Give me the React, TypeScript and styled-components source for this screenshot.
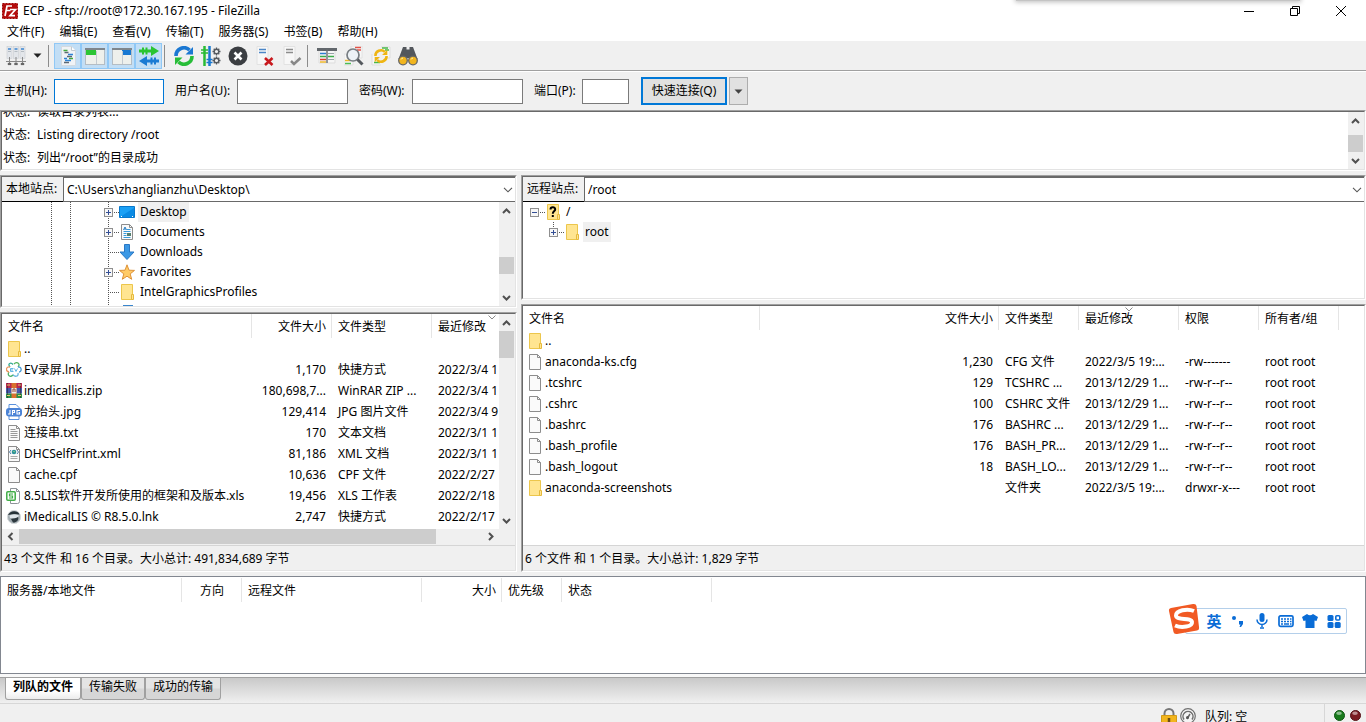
import React from "react";
import styled, { createGlobalStyle, css } from "styled-components";

const Global = createGlobalStyle`
  *, *::before, *::after { box-sizing: border-box; }
  html, body { margin: 0; background: #f0f0f0; }
  body, button, input, select, table {
    font-family: "Noto Sans", "Noto Sans CJK SC", sans-serif;
    font-size: 12px;
    line-height: 20px;
    color: #000;
  }
  button { margin: 0; padding: 0; border: 0; background: none; }
  svg { display: block; flex: none; }
`;

const Window = styled.div`
  position: relative;
  display: flex;
  flex-direction: column;
  height: 100vh;
  overflow: hidden;
  background: #f0f0f0;
`;

const FloatingEdge = styled.div`
  position: absolute;
  top: -8px;
  right: 66px;
  width: 284px;
  height: 9px;
  background: #c4c4c4;
  box-shadow: 0 0 5px 1px #bbb;
`;

const TitleBar = styled.header`
  display: flex;
  align-items: center;
  flex: none;
  height: 22px;
  padding: 0 2px 0 2px;
  gap: 5px;
  background: #fff;
`;

const Title = styled.h1`
  flex: 1;
  margin: 0;
  font-size: 12px;
  line-height: 22px;
  font-weight: 400;
`;

const WindowButton = styled.button`
  display: flex;
  align-items: center;
  justify-content: center;
  width: 46px;
  height: 20px;
  margin-left: -5px;
`;

const MenuBar = styled.nav`
  display: flex;
  flex: none;
  gap: 1px;
  height: 19px;
  background: #fff;
`;

const MenuItem = styled.button`
  height: 19px;
  padding: 0 7px;
  line-height: 20px;
  white-space: nowrap;
`;

const Toolbar = styled.div`
  display: flex;
  align-items: center;
  flex: none;
  height: 30px;
  padding: 0 0 0 2px;
  border-bottom: 1px solid #a0a0a0;
  box-shadow: 0 1px 0 #fff;
`;

const ToolButton = styled.button<{ $on?: boolean; $wide?: boolean }>`
  display: flex;
  align-items: center;
  justify-content: center;
  gap: 7px;
  width: ${(p) => (p.$wide ? 44 : 27)}px;
  height: 26px;
  border: 1px solid transparent;
  ${(p) =>
    p.$on &&
    css`
      background: #c2def5;
      border-color: #90c8f6;
    `}
`;

const ToolSeparator = styled.div`
  width: 1px;
  height: 22px;
  margin: 0 5px 0 2px;
  background: #8c8c8c;
`;

const QuickConnect = styled.form`
  display: flex;
  align-items: center;
  flex: none;
  height: 39px;
  padding: 1px 0 0 4px;
`;

const FieldLabel = styled.label<{ $w: number }>`
  width: ${(p) => p.$w}px;
  white-space: nowrap;
`;

const Field = styled.input<{ $w: number; $focused?: boolean }>`
  width: ${(p) => p.$w}px;
  height: 25px;
  margin: 0 11px 0 0;
  padding: 0 4px;
  border: 1px solid ${(p) => (p.$focused ? "#0078d7" : "#7a7a7a")};
  border-radius: 0;
  background: #fff;
  outline: none;
`;

const ConnectButton = styled.button`
  width: 86px;
  height: 28px;
  margin: 0 2px 0 1px;
  border: 2px solid #0078d7;
  background: #e1e1e1;
`;

const HistoryButton = styled.button`
  display: flex;
  align-items: center;
  justify-content: center;
  width: 19px;
  height: 28px;
  border: 1px solid #adadad;
  background: #e1e1e1;
`;

const Frame = styled.section<{ $h?: number; $grow?: boolean }>`
  display: flex;
  min-height: 0;
  flex: ${(p) => (p.$grow ? "1 1 0" : "none")};
  ${(p) => p.$h && css`height: ${p.$h}px;`}
  border: 1px solid;
  border-color: #a0a0a0 #fff #fff #a0a0a0;
`;

const Sunken = styled.div`
  display: flex;
  flex-direction: column;
  flex: 1;
  min-width: 0;
  min-height: 0;
  border: 1px solid;
  border-color: #696969 #e3e3e3 #e3e3e3 #696969;
  background: #fff;
`;

const Split = styled.div`
  display: flex;
  flex: 1;
  min-height: 0;
  overflow: hidden;
`;

const LogLines = styled.dl`
  display: flex;
  flex: 1;
  flex-direction: column;
  justify-content: flex-end;
  margin: 0;
  overflow: hidden;
`;

const LogLine = styled.div`
  display: flex;
  flex: none;
  height: 23px;
  padding-left: 1px;
  line-height: 23px;
  dt { width: 34px; }
  dd { margin: 0; }
`;

const Track = styled.div<{ $across?: boolean }>`
  display: flex;
  flex: none;
  flex-direction: ${(p) => (p.$across ? "row" : "column")};
  ${(p) => (p.$across ? "height: 15px;" : "width: 16px; padding-right: 1px;")}
  background: #f0f0f0;
`;

const TrackButton = styled.button<{ $across?: boolean }>`
  display: flex;
  flex: none;
  align-items: center;
  justify-content: center;
  width: ${(p) => (p.$across ? 17 : 15)}px;
  height: ${(p) => (p.$across ? 15 : 17)}px;
`;

const Space = styled.div<{ $grow: number }>`
  flex: ${(p) => p.$grow} 1 0;
`;

const Thumb = styled.div<{ $size: number; $across?: boolean }>`
  flex: none;
  ${(p) => (p.$across ? `width: ${p.$size}%;` : `height: ${p.$size}px;`)}
  background: #cdcdcd;
`;

const Panes = styled.main`
  display: grid;
  grid-template-columns: minmax(0, 517fr) minmax(0, 845fr);
  gap: 4px;
  flex: 1;
  min-height: 0;
  padding-top: 4px;
`;

const Pane = styled.div`
  display: flex;
  flex-direction: column;
  gap: 4px;
  min-height: 0;
`;

const PathRow = styled.div`
  display: flex;
  flex: none;
  height: 25px;
`;

const PathLabel = styled.label`
  width: 61px;
  padding-left: 4px;
  border-bottom: 1px solid #000;
  background: #f0f0f0;
  line-height: 23px;
  white-space: nowrap;
`;

const Combo = styled.div`
  position: relative;
  flex: 1;
  min-width: 0;
  border: 1px solid #696969;
  border-right: 0;
  select {
    width: 100%;
    height: 23px;
    padding: 0 20px 0 3px;
    border: 0;
    border-radius: 0;
    background: #fff;
    appearance: none;
    outline: none;
    line-height: 22px;
  }
  svg { position: absolute; top: 9px; right: 2px; pointer-events: none; }
`;

const TreeList = styled.ul`
  flex: 1;
  margin: 0;
  padding: 0;
  overflow: hidden;
  list-style: none;
`;

const TreeRow = styled.li`
  display: flex;
  align-items: center;
  height: 20px;
`;

const TreeLabel = styled.span<{ $selected?: boolean }>`
  height: 20px;
  margin-left: 3px;
  padding: 0 2px;
  line-height: 20px;
  background: ${(p) => (p.$selected ? "#f0f0f0" : "transparent")};
`;

const TableClip = styled.div`
  flex: 1;
  min-width: 0;
  overflow: hidden;
`;

const Table = styled.table<{ $w: number }>`
  width: ${(p) => p.$w}px;
  table-layout: fixed;
  border-collapse: separate;
  border-spacing: 0;
`;

const Th = styled.th<{ $align?: string }>`
  position: relative;
  height: 24px;
  padding: 0 5px 0 6px;
  border-right: 1px solid #e5e5e5;
  font-weight: 400;
  line-height: 23px;
  text-align: ${(p) => p.$align || "left"};
  white-space: nowrap;
  svg { position: absolute; top: 1px; left: calc(50% - 4px); }
`;

const Td = styled.td<{ $align?: string }>`
  height: 21px;
  padding: 0 6px;
  overflow: hidden;
  line-height: 21px;
  text-align: ${(p) => p.$align || "left"};
  text-overflow: ellipsis;
  white-space: nowrap;
`;

const NameCell = styled.span`
  display: flex;
  align-items: center;
  gap: 2px;
  height: 21px;
  margin-left: -2px;
`;

const Summary = styled.p`
  flex: none;
  height: 25px;
  margin: 0;
  padding-left: 2px;
  border-top: 1px solid #d5d5d5;
  background: #f0f0f0;
  line-height: 26px;
`;

const HScrollRow = styled.div`
  display: flex;
  flex: none;
  height: 16px;
  padding: 0 16px 1px 0;
  background: #f0f0f0;
  > div { flex: 1; }
`;

const Queue = styled.section`
  flex: none;
  height: 98px;
  margin-top: 4px;
  padding-top: 1px;
  border: 1px solid #828790;
  background: #fff;
`;

const TabStrip = styled.div`
  display: flex;
  align-items: flex-start;
  flex: none;
  height: 27px;
  margin-top: 3px;
  padding-left: 5px;
  border-top: 1px solid #a0a0a0;
  border-bottom: 1px solid #d7d7d7;
  background: linear-gradient(#c9c9c9, #f0f0f0);
  box-shadow: 0 -3px 0 #f8f8f8;
`;

const Tab = styled.button<{ $active?: boolean }>`
  height: 22px;
  padding: 0 7px 3px;
  border: 1px solid #a0a0a0;
  border-top: 0;
  border-radius: 0 0 3px 3px;
  line-height: 18px;
  font-weight: ${(p) => (p.$active ? 700 : 400)};
  white-space: nowrap;
  background: ${(p) =>
    p.$active ? "linear-gradient(#fff, #fff 60%, #ececec)" : "linear-gradient(#e4e4e4 45%, #d6d6d6 55%)"};
`;

const StatusBar = styled.footer`
  display: flex;
  flex: none;
  justify-content: flex-end;
  height: 18px;
  padding-right: 5px;
  overflow: hidden;
`;

const StatusText = styled.span`
  width: 119px;
  margin-left: 9px;
  line-height: 26px;
`;

const StatusIcons = styled.span`
  display: flex;
  gap: 3px;
  padding-top: 4px;
`;

const Lights = styled.span`
  display: flex;
  gap: 5px;
  padding: 6px 0 0 9px;
  border-left: 1px solid #d7d7d7;
`;

const InputMethod = styled.aside`
  position: absolute;
  right: 19px;
  bottom: 88px;
  display: flex;
  align-items: center;
  width: 162px;
  height: 26px;
  padding-left: 16px;
  border: 1px solid #b4cfea;
  border-radius: 2px;
  background: #fff;
`;

const ImeLogo = styled.span`
  position: absolute;
  left: -18px;
  bottom: -2px;
`;

const ImeButton = styled.button`
  display: flex;
  align-items: center;
  justify-content: center;
  width: 24px;
  height: 24px;
  color: #0a6cd6;
  font-size: 15px;
  font-weight: 700;
`;

/* ---------- icons ---------- */

const Svg = ({ w, h, children }: { w: number; h: number; children: React.ReactNode }) => (
  <svg width={w} height={h} viewBox={`0 0 ${w} ${h}`} fill="none" aria-hidden="true">
    {children}
  </svg>
);

const chevrons = {
  up: "M1 7 L4.5 3.5 L8 7",
  down: "M1 3 L4.5 6.5 L8 3",
  left: "M6.5 1 L3 4.5 L6.5 8",
  right: "M3 1 L6.5 4.5 L3 8",
};
const Chevron = ({ dir }: { dir: keyof typeof chevrons }) => (
  <Svg w={9} h={9}>
    <path d={chevrons[dir]} stroke="#505050" strokeWidth="2" />
  </Svg>
);
const ComboArrow = () => (
  <Svg w={10} h={6}>
    <path d="M1 .8 L5 4.8 L9 .8" stroke="#555" strokeWidth="1.1" />
  </Svg>
);
const SortMark = () => (
  <Svg w={8} h={5}>
    <path d="M.5 .5 L4 4 L7.5 .5" stroke="#8a8a8a" strokeWidth="1" />
  </Svg>
);
const Triangle = ({ color = "#222" }: { color?: string }) => (
  <Svg w={9} h={5}>
    <path d="M.5 .5H8.5L4.5 4.8Z" fill={color} />
  </Svg>
);

const AppLogo = () => (
  <Svg w={16} h={16}>
    <rect x=".5" y=".5" width="15" height="15" fill="#b30c0c" stroke="#9c0707" strokeDasharray="2 1" />
    <path d="M3 13 5 3h5M4 7.5h4.5M8 6.5h5.5L8 12.7h5" stroke="#fff" strokeWidth="1.7" />
  </Svg>
);

const SiteManagerIcon = () => (
  <Svg w={20} h={20}>
    {[1, 7.5, 14].map((x) => (
      <g key={x}>
        <rect x={x} y=".5" width="5" height="12" fill="#e3e6ea" stroke="#c9cdd2" strokeWidth=".6" />
        <path d={`M${x + 1} 3h3`} stroke="#2f7fd0" strokeWidth="1.4" />
        <path d={`M${x + 1} 5.500h3`} stroke="#b5bcc2" />
        <path d={`M${x + 2.5} 11v7`} stroke="#888" />
        <path d={`M${x + 0.8} 18h3.400`} stroke="#666" strokeWidth="2.200" />
      </g>
    ))}
    <path d="M0 15.500h20" stroke="#888" strokeWidth="1" />
  </Svg>
);
const LogIcon = () => (
  <Svg w={20} h={20}>
    <path d="M3.500 .500h10l4 4v15h-14z" fill="#f0f3f6" stroke="#d3dae0" />
    <path d="M13.500 .500v4h4" fill="#fff" stroke="#c2cad1" />
    <path d="M5.500 4.500h4M11 12.500h4" stroke="#41a83e" strokeWidth="1.500" />
    <path d="M6.500 6.500h4M9 10.500h5M6 16.500h5" stroke="#5d6873" strokeWidth="1.500" />
    <path d="M10 8.500h5M6 12.500h3M7 14.500h6" stroke="#2d83d6" strokeWidth="1.500" />
  </Svg>
);
const PaneIcon = ({ remote }: { remote?: boolean }) => (
  <Svg w={20} h={20}>
    <rect x=".5" y="2.500" width="19" height="16" fill="#eef0ec" stroke="#b4bdc4" />
    <rect x="0" y="2" width="20" height="2" fill="#7f868c" />
    <rect x={remote ? 10 : 1} y="4" width={remote ? 9 : 10} height="5" fill={remote ? "#1979d2" : "#2cc534"} />
    <path d={remote ? "M10.500 5v13" : "M11.500 5v13"} stroke="#c3cad0" />
  </Svg>
);
const QueueIcon = () => (
  <Svg w={20} h={20}>
    <path d="M0 3.500h12V0l8 5-8 5V6.500H0z" fill="#2bc531" />
    <path d="M4 1.500v7M7.500 1.500v7" stroke="#2bc531" strokeWidth="2" />
    <path d="M20 13.500H8V10L0 15l8 5v-3.500h12z" fill="#1b7bd3" />
    <path d="M12.500 11.500v7M16 11.500v7" stroke="#1b7bd3" strokeWidth="2" />
  </Svg>
);
const RefreshIcon = ({ small }: { small?: boolean }) => (
  <svg width={20} height={20} viewBox="0 0 20 20" fill="none" aria-hidden="true">
    {small && <path d="M10 1h9v11h-4M1 8v11h9" fill="#f7f7f7" stroke="#ddd" />}
    {small && <path d="M11 2h6M14 4h4M3 16.500h6" stroke="#48b848" strokeWidth="1.400" />}
    <g transform={small ? "translate(3 3) scale(.7)" : undefined} strokeWidth="3.600">
      <path d="M2 10A8 8 0 0 1 15.500 4" stroke={small ? "#efb512" : "#1b78d2"} />
      <path d="M11.500 8.500H19V1z" fill={small ? "#efb512" : "#1b78d2"} />
      <path d="M18 10A8 8 0 0 1 4.500 16" stroke={small ? "#efb512" : "#27bd38"} />
      <path d="M8.500 11.500H1V19z" fill={small ? "#efb512" : "#27bd38"} />
    </g>
  </svg>
);
const gearTeeth = "M0-4V4M-4 0H4M-2.800-2.800 2.800 2.800M-2.800 2.800 2.800-2.800";
const Gear = ({ x, y }: { x: number; y: number }) => (
  <g transform={`translate(${x} ${y})`}>
    <path d={gearTeeth} stroke="#555a60" strokeWidth="1.300" />
    <circle r="2.300" fill="#f0f0f0" stroke="#555a60" strokeWidth="1.400" />
  </g>
);
const ProcessIcon = () => (
  <Svg w={20} h={20}>
    <path d="M3.500 0v20" stroke="#2abb35" strokeWidth="2.500" />
    <path d="M0 4h7M0 7h7" stroke="#2abb35" strokeWidth="1.600" />
    <path d="M8.500 0v20" stroke="#1978d0" strokeWidth="2.500" />
    <path d="M5.500 13.500h6M5.500 16.500h6" stroke="#1978d0" strokeWidth="1.400" />
    <Gear x={15.5} y={5.5} />
    <Gear x={15.5} y={14.5} />
  </Svg>
);
const CancelIcon = () => (
  <Svg w={20} h={20}>
    <circle cx="10" cy="10" r="9.500" fill="#3b3e42" />
    <path d="m6.500 6.500 7 7m0-7-7 7" stroke="#fff" strokeWidth="2.600" />
  </Svg>
);
const ServerIcon = ({ ok }: { ok?: boolean }) => (
  <Svg w={20} h={20}>
    <path d="M2 .500h11v18H2z" fill="#f7f7f7" stroke="#e2e2e2" />
    <path d="M4 3.500h7M4 6.500h7" stroke={ok ? "#8c8c8c" : "#4b86c7"} strokeWidth="1.500" />
    {ok ? (
      <path d="m9 15 3 3 6.500-6" stroke="#888" strokeWidth="2.500" />
    ) : (
      <path d="m10 12 7.500 7m0-7-7.500 7" stroke="#c8181d" strokeWidth="2.600" />
    )}
  </Svg>
);
const FilterIcon = () => (
  <Svg w={20} h={20}>
    <path d="M2 4h16v13H2z" fill="#f6f6f6" stroke="#ddd" />
    <path d="M0 3.500h20" stroke="#62676c" strokeWidth="3" />
    <path d="M10 3v14" stroke="#686d72" strokeWidth="1.400" />
    <path d="M3 7.500h6" stroke="#2d7fd0" strokeWidth="1.500" />
    <path d="M3 10.500h6M11 10.500h6" stroke="#3cae4a" strokeWidth="1.500" />
    <path d="M3 13.500h6" stroke="#db3b31" strokeWidth="1.500" />
    <path d="M11 7.500h6M11 13.500h6" stroke="#9aa2a9" strokeWidth="1.200" />
    <path d="M3 16h6" stroke="#efb61d" strokeWidth="1.400" />
  </Svg>
);
const CompareIcon = () => (
  <Svg w={20} h={20}>
    <path d="M7 0h11v12H7zM0 8h9v11H0z" fill="#f7f7f7" stroke="#ddd" strokeWidth=".8" />
    <path d="M11 1.500h6M13 4h4" stroke="#e25349" strokeWidth="1.500" />
    <path d="M1 14.500h5" stroke="#eeb529" strokeWidth="1.500" />
    <path d="M1 17.500h6" stroke="#4ebb55" strokeWidth="1.500" />
    <circle cx="9" cy="9" r="6" fill="#edf2f6" stroke="#777d82" strokeWidth="1.700" />
    <path d="m13.500 13.500 5 5" stroke="#55595e" strokeWidth="3" />
  </Svg>
);
const BinocularsIcon = () => (
  <Svg w={20} h={20}>
    <path d="M5 1h3.500v2.500h3V1H15l4.500 12-5 3-3.500-4H9l-3.500 4-5-3z" fill="#53575c" />
    <circle cx="5" cy="14.500" r="4.300" fill="#f1b51e" stroke="#666" strokeWidth="1.300" />
    <circle cx="15" cy="14.500" r="4.300" fill="#f1b51e" stroke="#666" strokeWidth="1.300" />
    <path d="M3 13.500a2.500 2.500 0 0 1 2-1.500M13 13.500a2.500 2.500 0 0 1 2-1.500" stroke="#fff0b8" />
  </Svg>
);

const Folder = ({ unknown }: { unknown?: boolean }) => (
  <Svg w={16} h={16}>
    <path d="M2.500.500h11v15h-11z" fill="#ffe591" stroke="#ecc64c" />
    <path d="M12.500 10.500h2v5h-2z" fill="#ffe591" stroke="#e6ba3c" />
    {unknown && (
      <>
        <path d="M5.500 5.500C5.500 2.500 10.200 2.500 10.200 5.300 10.200 7.300 7.800 7.300 7.800 9.700" stroke="#000" strokeWidth="2" />
        <path d="M6.800 11h2v2h-2z" fill="#000" />
      </>
    )}
  </Svg>
);
const Page = ({ children }: { children?: React.ReactNode }) => (
  <Svg w={16} h={16}>
    <g transform="translate(1 0)">
      <path d="M1.500.500h8l3 3v12h-11z" fill="#fafafa" stroke="#8d8d8d" />
      <path d="M9.500.500v3h3" stroke="#8d8d8d" />
      {children}
    </g>
  </Svg>
);
const TextPage = () => (
  <Page>
    <path d="M3.500 4.500h5M3.500 6.500h7M3.500 8.500h7M3.500 10.500h7M3.500 12.500h7" stroke="#999" />
  </Page>
);
const XmlPage = () => (
  <Page>
    <path d="M4 4 2.500 6 4 8M10 4l1.500 2L10 8" stroke="#4b7ba9" />
    <circle cx="7" cy="6" r="2.300" fill="#2d9299" />
    <path d="M6 5h1.500v1.500z" fill="#b9e67c" />
    <path d="M3.500 10.500h7M3.500 12.500h7" stroke="#aaa" />
  </Page>
);
const DocPage = () => (
  <Page>
    <path d="m3.500 6 1.500-3 1.500 3M4 5h2" stroke="#2b80c5" />
    <path d="M7 5.500h3.500M3.500 7.500h7M3.500 9.500h3M3.500 11.500h3M3.500 13.500h7" stroke="#379bdb" />
    <path d="M7 9h4v3H7z" fill="#547f70" />
  </Page>
);
const SheetIcon = () => (
  <Svg w={16} h={16}>
    <path d="M4.500.500h6l3 3v10q0 2-2 2h-7z" fill="#fff" stroke="#8e9499" />
    <path d="M10.500.500v3h3" stroke="#8e9499" />
    <rect x=".800" y="3.800" width="8.400" height="8.400" rx="1" fill="#fff" stroke="#40ad46" strokeWidth="1.500" />
    <path d="M7 6H3.500v2H6.500v2H3" stroke="#40ad46" strokeWidth="1.200" />
  </Svg>
);
const JpgIcon = () => (
  <Svg w={16} h={16}>
    <path d="M3 .500h7l3 3v12H3z" fill="#fff" stroke="#5b91dc" />
    <rect y="4" width="16" height="8.500" rx="3" fill="#4b83d6" />
    <path d="M4 6v4H2M6.500 11V6.500h2v2h-2M14 6.500h-3V10h2.500V8.500h-1" stroke="#fff" strokeWidth="1.100" />
  </Svg>
);
const ArchiveIcon = () => (
  <Svg w={16} h={16}>
    <path d="M0 0h16v5H0z" fill="#b92850" />
    <path d="M0 5h16v5.500H0z" fill="#4657aa" />
    <path d="M0 10.500h16V15H0z" fill="#2b914a" />
    <path d="M1.500 0v15M14.500 0v15" stroke="#222" strokeOpacity=".5" />
    <path d="M5.500 0h5v15h-5z" fill="#d9712e" />
    <path d="M5.500 5h5v5.500h-5z" fill="#eee" />
    <path d="M7 9V6h2v3" stroke="#9d432d" />
    <path d="M1 2h3M12 2h3M1 12.500h3M12 12.500h3" stroke="#e9c968" />
  </Svg>
);
const RecorderIcon = () => (
  <Svg w={16} h={16}>
    <path d="M4 5C1 1.500 5 0 7 2.500" stroke="#2faa90" strokeWidth="1.300" />
    <path d="M8 2c3-3 7 0 4 3" stroke="#56b45f" strokeWidth="1.300" />
    <path d="M12 5c4-.500 4 5 1 5" stroke="#4296d4" strokeWidth="1.300" />
    <path d="M12 11c1 4-4 4-5 1.500" stroke="#65b5e0" strokeWidth="1.300" />
    <path d="M7 13c-3 3-6 0-4-3" stroke="#4cb267" strokeWidth="1.300" />
    <path d="M3 10C-1 9 0 4 4 5" stroke="#e9945e" strokeWidth="1.300" />
    <path d="M7.500 6.500h-3v3h3M4.500 8H7M8.500 6.500l1.500 3 1.500-3" stroke="#52aee1" strokeWidth=".9" />
  </Svg>
);
const MedicalIcon = () => (
  <Svg w={16} h={16}>
    <circle cx="8" cy="8" r="6.600" fill="#a3adb2" stroke="#d4d8da" />
    <path d="M2 6C4 1 12 1 13.500 5.500L8 5z" fill="#253137" />
    <path d="M3.500 6.500c3-1.500 7-1 9.500 0l-2 3c-3 .5-4-.5-7-.5z" fill="#dfe6ea" />
    <path d="M5 10c3-1 5-.5 7-2 1.500 3-2 6-5 5.500z" fill="#2c383e" />
  </Svg>
);
const DesktopIcon = () => (
  <Svg w={16} h={16}>
    <path d="M.500 2.500h15v11H.500z" fill="#1aa0f5" stroke="#0878cc" />
    <path d="M1 13h14V4z" fill="#098ae4" />
    <path d="M2 12.500h1M13 12.500h1" stroke="#fff" />
  </Svg>
);
const DownloadIcon = () => (
  <Svg w={16} h={16}>
    <path d="M5.500.500h5V8H15l-7 7.500L1 8h4.500z" fill="#3b98e5" stroke="#2a78c5" />
  </Svg>
);
const StarIcon = () => (
  <Svg w={16} h={16}>
    <path d="m8 .800 2 5.400 5.500.200-4.300 3.500 1.500 5.400L8 12.200l-4.700 3.100 1.500-5.400L.500 6.400 6 6.200z" fill="#ffcb67" stroke="#dd9138" />
  </Svg>
);
const LinkIcon = () => (
  <Svg w={16} h={16}>
    <path d="M4 1h10v14H4z" fill="#3a86cd" />
  </Svg>
);

/* Dotted connector lines and the expander box in front of a tree node. */
const Guide = ({
  width,
  lines,
  node,
  state,
  end,
}: {
  width: number;
  lines: number[];
  node: number;
  state?: "open" | "closed";
  end?: number;
}) => (
  <Svg w={width} h={20}>
    {lines.map((x) => (
      <path key={x} d={`M${x + 0.5} 0V${end || 20}`} stroke="#555" strokeDasharray="1 1" />
    ))}
    <path d={`M${node} 10.500H${width}`} stroke="#555" strokeDasharray="1 1" />
    {state && (
      <>
        <rect x={node - 3.5} y="6.500" width="8" height="8" fill="#f7f7f7" stroke="#8f8f8f" />
        <path d={`M${node - 2} 10.500h5`} stroke="#344f95" />
        {state === "closed" && <path d={`M${node + 0.5} 8v5`} stroke="#344f95" />}
      </>
    )}
  </Svg>
);

const LockIcon = () => (
  <Svg w={16} h={18}>
    <path d="M3.500 9V5.500a4.500 4.500 0 0 1 9 0V9" stroke="#777" strokeWidth="2" />
    <path d="M.500 7.500h15V18H.500z" fill="#f2b51d" stroke="#d39a16" />
    <path d="M8 10v4" stroke="#6d4f10" strokeWidth="2.500" />
  </Svg>
);
const SpeedIcon = () => (
  <Svg w={16} h={16}>
    <circle cx="8" cy="8" r="7.300" fill="#f4f4f4" stroke="#707070" strokeWidth="1.200" />
    <path d="M4 11.500A5 5 0 1 1 12 11.500" stroke="#6c6c6c" strokeWidth="1.500" />
    <path d="m7 11 3-5" stroke="#666" strokeWidth="1.500" />
    <circle cx="7.500" cy="9.500" r="1.500" fill="#555" />
  </Svg>
);
const Light = ({ color, edge }: { color: string; edge: string }) => (
  <Svg w={11} h={11}>
    <circle cx="5.500" cy="5.500" r="5" fill={color} stroke={edge} />
    <ellipse cx="5" cy="3.200" rx="2.800" ry="1.700" fill="#fff" fillOpacity=".5" />
  </Svg>
);

const SogouLogo = () => (
  <Svg w={32} h={32}>
    <path d="M3 5 25 1q3-.500 3.500 2L31 24q.500 3-2 3.500L9 31q-3 .500-3.500-2L1 8Q.500 5.500 3 5Z" fill="#f15a24" />
    <path d="M26 8C19 5 8 7.500 8 12.500c0 5.500 15.500 1.500 16 6.500.500 4.500-10 6.500-17 3.500" stroke="#fff" strokeWidth="4" />
  </Svg>
);
const blue = "#0a6cd6";
const PunctuationIcon = () => (
  <Svg w={16} h={16}>
    <circle cx="4" cy="5" r="2" fill={blue} />
    <path d="M9 8h4v3l-2 3H9.500l1-2.500H9z" fill={blue} />
  </Svg>
);
const MicIcon = () => (
  <Svg w={16} h={16}>
    <rect x="5.500" y="0" width="5" height="9" rx="2.500" fill={blue} />
    <path d="M3 6.500a5 5 0 0 0 10 0M8 11.500V14M6 15h4" stroke={blue} strokeWidth="1.500" />
  </Svg>
);
const KeyboardIcon = () => (
  <Svg w={16} h={16}>
    <rect x="1" y="2.800" width="14" height="10.500" rx="1.500" stroke={blue} strokeWidth="1.700" />
    <path d="M3 6h2m1 0h2m1 0h2m1 0h1.500M3 8.500h2m1 0h2m1 0h2m1 0h1.500M3 11h2m1 0h5m1 0h1.500" stroke={blue} strokeWidth="1.300" />
  </Svg>
);
const ShirtIcon = () => (
  <Svg w={16} h={16}>
    <path d="M5 1q3 2.500 6 0l5 3-1.500 4-2-.500V15h-9V7.500l-2 .500L0 4z" fill={blue} />
  </Svg>
);
const GridIcon = () => (
  <Svg w={16} h={16}>
    <rect x="1.500" y="2" width="6" height="6" rx="1.500" fill={blue} />
    <rect x="9.800" y="2.800" width="4" height="4.200" rx="1" stroke={blue} strokeWidth="1.600" />
    <rect x="1.500" y="9" width="6" height="6" rx="1.500" fill={blue} />
    <rect x="8.700" y="9" width="6" height="6" rx="1.500" fill={blue} />
  </Svg>
);

/* ---------- data ---------- */

type Column = { title: string; width?: number; align?: string; sorted?: boolean };

const localColumns: Column[] = [
  { title: "文件名", width: 250 },
  { title: "文件大小", width: 80, align: "right" },
  { title: "文件类型", width: 100 },
  { title: "最近修改", width: 120, sorted: true },
];
const localFiles: [React.ReactNode, ...string[]][] = [
  [<Folder />, "..", "", "", ""],
  [<RecorderIcon />, "EV录屏.lnk", "1,170", "快捷方式", "2022/3/4 1"],
  [<ArchiveIcon />, "imedicallis.zip", "180,698,7...", "WinRAR ZIP ...", "2022/3/4 1"],
  [<JpgIcon />, "龙抬头.jpg", "129,414", "JPG 图片文件", "2022/3/4 9"],
  [<TextPage />, "连接串.txt", "170", "文本文档", "2022/3/1 1"],
  [<XmlPage />, "DHCSelfPrint.xml", "81,186", "XML 文档", "2022/3/1 1"],
  [<Page />, "cache.cpf", "10,636", "CPF 文件", "2022/2/27"],
  [<SheetIcon />, "8.5LIS软件开发所使用的框架和及版本.xls", "19,456", "XLS 工作表", "2022/2/18"],
  [<MedicalIcon />, "iMedicalLIS © R8.5.0.lnk", "2,747", "快捷方式", "2022/2/17"],
];

const remoteColumns: Column[] = [
  { title: "文件名", width: 237 },
  { title: "文件大小", width: 239, align: "right" },
  { title: "文件类型", width: 80 },
  { title: "最近修改", width: 100, sorted: true },
  { title: "权限", width: 80 },
  { title: "所有者/组", width: 80 },
];
const remoteFiles: [React.ReactNode, ...string[]][] = [
  [<Folder />, "..", "", "", "", "", ""],
  [<Page />, "anaconda-ks.cfg", "1,230", "CFG 文件", "2022/3/5 19:...", "-rw-------", "root root"],
  [<Page />, ".tcshrc", "129", "TCSHRC ...", "2013/12/29 1...", "-rw-r--r--", "root root"],
  [<Page />, ".cshrc", "100", "CSHRC 文件", "2013/12/29 1...", "-rw-r--r--", "root root"],
  [<Page />, ".bashrc", "176", "BASHRC ...", "2013/12/29 1...", "-rw-r--r--", "root root"],
  [<Page />, ".bash_profile", "176", "BASH_PR...", "2013/12/29 1...", "-rw-r--r--", "root root"],
  [<Page />, ".bash_logout", "18", "BASH_LO...", "2013/12/29 1...", "-rw-r--r--", "root root"],
  [<Folder />, "anaconda-screenshots", "", "文件夹", "2022/3/5 19:...", "drwxr-x---", "root root"],
];

const queueColumns: Column[] = [
  { title: "服务器/本地文件", width: 181 },
  { title: "方向", width: 60, align: "center" },
  { title: "远程文件", width: 180 },
  { title: "大小", width: 80, align: "right" },
  { title: "优先级", width: 60 },
  { title: "状态", width: 150 },
];

const FileTable = ({ columns, rows = [] }: { columns: Column[]; rows?: [React.ReactNode, ...string[]][] }) => (
  <TableClip>
    <Table $w={columns.reduce((sum, c) => sum + (c.width || 0), 0)}>
      <colgroup>
        {columns.map((c) => (
          <col key={c.title} width={c.width} />
        ))}
      </colgroup>
      <thead>
        <tr>
          {columns.map((c) => (
            <Th key={c.title} $align={c.align} scope="col">
              {c.title}
              {c.sorted && <SortMark />}
            </Th>
          ))}
        </tr>
      </thead>
      <tbody>
        {rows.map(([icon, name, ...cells]) => (
          <tr key={name}>
            <Td>
              <NameCell>
                {icon}
                {name}
              </NameCell>
            </Td>
            {cells.map((cell, i) => (
              <Td key={i} $align={columns[i + 1].align}>
                {cell}
              </Td>
            ))}
          </tr>
        ))}
      </tbody>
    </Table>
  </TableClip>
);

const VScroll = ({ thumb, before, after }: { thumb: number; before: number; after: number }) => (
  <Track>
    <TrackButton aria-label="向上滚动">
      <Chevron dir="up" />
    </TrackButton>
    <Space $grow={before} />
    <Thumb $size={thumb} />
    <Space $grow={after} />
    <TrackButton aria-label="向下滚动">
      <Chevron dir="down" />
    </TrackButton>
  </Track>
);

const PathBar = ({ id, label, path }: { id: string; label: string; path: string }) => (
  <PathRow>
    <PathLabel htmlFor={id}>{label}</PathLabel>
    <Combo>
      <select id={id} defaultValue={path}>
        <option>{path}</option>
      </select>
      <ComboArrow />
    </Combo>
  </PathRow>
);

const guideLines = [49, 68, 106];

export default function App() {
  return (
    <Window>
      <Global />
      <TitleBar>
        <AppLogo />
        <Title>ECP - sftp://root@172.30.167.195 - FileZilla</Title>
        <WindowButton aria-label="最小化">
          <Svg w={10} h={10}>
            <path d="M0 5.500h10" stroke="#000" />
          </Svg>
        </WindowButton>
        <WindowButton aria-label="还原">
          <Svg w={10} h={10}>
            <path d="M.500 2.500h7v7h-7zM2.500 2.500V.500h7v7H7.500" stroke="#000" />
          </Svg>
        </WindowButton>
        <WindowButton aria-label="关闭">
          <Svg w={10} h={10}>
            <path d="m0 0 10 10m0-10L0 10" stroke="#000" />
          </Svg>
        </WindowButton>
      </TitleBar>
      <FloatingEdge />
      <MenuBar>
        {["文件(F)", "编辑(E)", "查看(V)", "传输(T)", "服务器(S)", "书签(B)", "帮助(H)"].map((m) => (
          <MenuItem key={m}>{m}</MenuItem>
        ))}
      </MenuBar>
      <Toolbar role="toolbar">
        <ToolButton $wide aria-label="站点管理器">
          <SiteManagerIcon />
          <Triangle />
        </ToolButton>
        <ToolSeparator />
        <ToolButton $on aria-label="消息日志"><LogIcon /></ToolButton>
        <ToolButton $on aria-label="本地目录树"><PaneIcon /></ToolButton>
        <ToolButton $on aria-label="远程目录树"><PaneIcon remote /></ToolButton>
        <ToolButton $on aria-label="传输队列"><QueueIcon /></ToolButton>
        <ToolSeparator />
        <ToolButton aria-label="刷新"><RefreshIcon /></ToolButton>
        <ToolButton aria-label="处理队列"><ProcessIcon /></ToolButton>
        <ToolButton aria-label="取消"><CancelIcon /></ToolButton>
        <ToolButton aria-label="断开"><ServerIcon /></ToolButton>
        <ToolButton aria-label="重新连接"><ServerIcon ok /></ToolButton>
        <ToolSeparator />
        <ToolButton aria-label="过滤器"><FilterIcon /></ToolButton>
        <ToolButton aria-label="目录对比"><CompareIcon /></ToolButton>
        <ToolButton aria-label="同步浏览"><RefreshIcon small /></ToolButton>
        <ToolButton aria-label="搜索"><BinocularsIcon /></ToolButton>
      </Toolbar>
      <QuickConnect onSubmit={(e) => e.preventDefault()}>
        <FieldLabel $w={50} htmlFor="host">主机(H):</FieldLabel>
        <Field $w={110} $focused id="host" />
        <FieldLabel $w={62} htmlFor="user">用户名(U):</FieldLabel>
        <Field $w={111} id="user" />
        <FieldLabel $w={53} htmlFor="pass">密码(W):</FieldLabel>
        <Field $w={111} id="pass" type="password" />
        <FieldLabel $w={48} htmlFor="port">端口(P):</FieldLabel>
        <Field $w={47} id="port" />
        <ConnectButton type="submit">快速连接(Q)</ConnectButton>
        <HistoryButton type="button" aria-label="历史记录">
          <Triangle color="#444" />
        </HistoryButton>
      </QuickConnect>

      <Frame $h={61}>
        <Sunken>
          <Split>
            <LogLines>
              <LogLine><dt>状态:</dt><dd>读取目录列表...</dd></LogLine>
              <LogLine><dt>状态:</dt><dd>Listing directory /root</dd></LogLine>
              <LogLine><dt>状态:</dt><dd>列出“/root”的目录成功</dd></LogLine>
            </LogLines>
            <VScroll thumb={17} before={1} after={0} />
          </Split>
        </Sunken>
      </Frame>

      <Panes>
        <Pane>
          <Frame $h={133}>
            <Sunken>
              <PathBar id="local-site" label="本地站点:" path="C:\Users\zhanglianzhu\Desktop\" />
              <Split>
                <TreeList>
                  <TreeRow>
                    <Guide width={117} lines={guideLines} node={106} state="closed" />
                    <DesktopIcon />
                    <TreeLabel $selected>Desktop</TreeLabel>
                  </TreeRow>
                  <TreeRow>
                    <Guide width={117} lines={guideLines} node={106} state="closed" />
                    <DocPage />
                    <TreeLabel>Documents</TreeLabel>
                  </TreeRow>
                  <TreeRow>
                    <Guide width={117} lines={guideLines} node={106} />
                    <DownloadIcon />
                    <TreeLabel>Downloads</TreeLabel>
                  </TreeRow>
                  <TreeRow>
                    <Guide width={117} lines={guideLines} node={106} state="closed" />
                    <StarIcon />
                    <TreeLabel>Favorites</TreeLabel>
                  </TreeRow>
                  <TreeRow>
                    <Guide width={117} lines={guideLines} node={106} />
                    <Folder />
                    <TreeLabel>IntelGraphicsProfiles</TreeLabel>
                  </TreeRow>
                  <TreeRow>
                    <Guide width={117} lines={guideLines} node={106} />
                    <LinkIcon />
                  </TreeRow>
                </TreeList>
                <VScroll thumb={17} before={38} after={15} />
              </Split>
            </Sunken>
          </Frame>
          <Frame $grow>
            <Sunken>
              <Split>
                <FileTable columns={localColumns} rows={localFiles} />
                <VScroll thumb={27} before={0} after={1} />
              </Split>
              <HScrollRow>
                <Track $across>
                  <TrackButton $across aria-label="向左滚动">
                    <Chevron dir="left" />
                  </TrackButton>
                  <Thumb $across $size={84} />
                  <Space $grow={1} />
                  <TrackButton $across aria-label="向右滚动">
                    <Chevron dir="right" />
                  </TrackButton>
                </Track>
              </HScrollRow>
              <Summary>43 个文件 和 16 个目录。大小总计: 491,834,689 字节</Summary>
            </Sunken>
          </Frame>
        </Pane>
        <Pane>
          <Frame $h={125}>
            <Sunken>
              <PathBar id="remote-site" label="远程站点:" path="/root" />
              <Split>
                <TreeList>
                  <TreeRow>
                    <Guide width={22} lines={[]} node={11} state="open" />
                    <Folder unknown />
                    <TreeLabel>/</TreeLabel>
                  </TreeRow>
                  <TreeRow>
                    <Guide width={41} lines={[30]} node={30} end={10} state="closed" />
                    <Folder />
                    <TreeLabel $selected>root</TreeLabel>
                  </TreeRow>
                </TreeList>
              </Split>
            </Sunken>
          </Frame>
          <Frame $grow>
            <Sunken>
              <Split>
                <FileTable columns={remoteColumns} rows={remoteFiles} />
              </Split>
              <Summary>6 个文件 和 1 个目录。大小总计: 1,829 字节</Summary>
            </Sunken>
          </Frame>
        </Pane>
      </Panes>

      <Queue>
        <FileTable columns={queueColumns} />
      </Queue>
      <TabStrip role="tablist">
        <Tab $active role="tab">列队的文件</Tab>
        <Tab role="tab">传输失败</Tab>
        <Tab role="tab">成功的传输</Tab>
      </TabStrip>
      <StatusBar>
        <StatusIcons>
          <LockIcon />
          <SpeedIcon />
        </StatusIcons>
        <StatusText>队列: 空</StatusText>
        <Lights>
          <Light color="#187a1c" edge="#0d5511" />
          <Light color="#7a1c22" edge="#521015" />
        </Lights>
      </StatusBar>

      <InputMethod>
        <ImeLogo>
          <SogouLogo />
        </ImeLogo>
        <ImeButton>英</ImeButton>
        <ImeButton aria-label="标点"><PunctuationIcon /></ImeButton>
        <ImeButton aria-label="语音"><MicIcon /></ImeButton>
        <ImeButton aria-label="键盘"><KeyboardIcon /></ImeButton>
        <ImeButton aria-label="皮肤"><ShirtIcon /></ImeButton>
        <ImeButton aria-label="工具箱"><GridIcon /></ImeButton>
      </InputMethod>
    </Window>
  );
}
